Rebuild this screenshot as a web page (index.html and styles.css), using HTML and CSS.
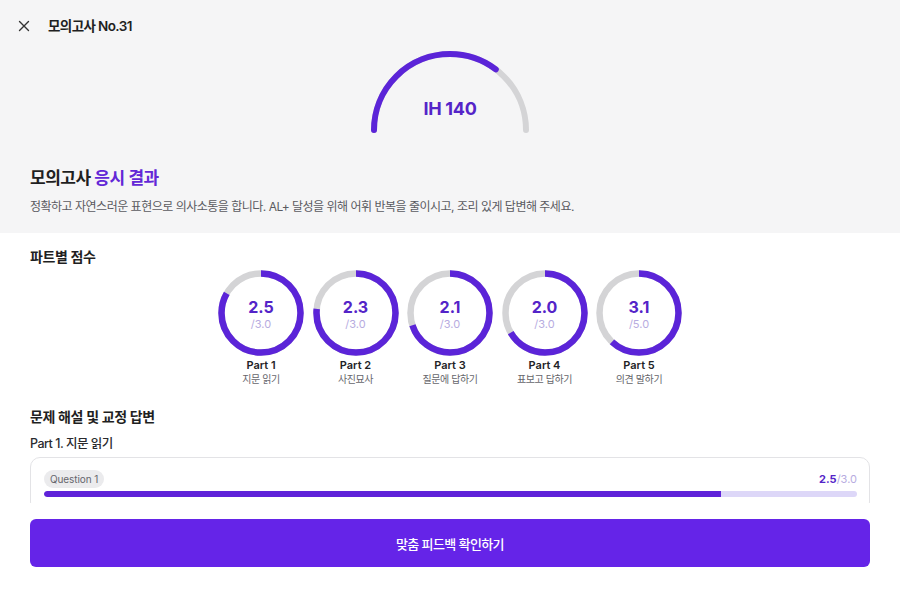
FILE: index.html
```html
<!DOCTYPE html>
<html lang="ko">
<head>
<meta charset="utf-8">
<title>모의고사 No.31</title>
<link rel="stylesheet" href="styles.css">
</head>
<body>
<div class="page">
  <header class="top">
    <div class="topbar">
      <button class="close" aria-label="닫기">
        <svg width="12" height="12" viewBox="0 0 12 12"><path d="M1.5 1.5 L10.5 10.5 M10.5 1.5 L1.5 10.5" stroke="#333" stroke-width="1.4" stroke-linecap="round" fill="none"/></svg>
      </button>
      <span class="toptitle">모의고사 No.31</span>
    </div>
    <div class="gauge">
      <svg width="164" height="90" viewBox="0 0 164 90">
        <path d="M6 83 A76 76 0 0 1 158 83" stroke="#d4d4d6" stroke-width="6" fill="none" stroke-linecap="round"/>
        <path d="M6 83 A76 76 0 0 1 158 83" stroke="#5b24d8" stroke-width="6" fill="none" stroke-linecap="round" pathLength="100" stroke-dasharray="70.6 200"/>
      </svg>
      <div class="gauge-label">IH 140</div>
    </div>
    <h1 class="result-title">모의고사 <span class="accent">응시 결과</span></h1>
    <p class="result-desc">정확하고 자연스러운 표현으로 의사소통을 합니다. AL+ 달성을 위해 어휘 반복을 줄이시고, 조리 있게 답변해 주세요.</p>
  </header>

  <main class="content">
    <h2 class="section-title">파트별 점수</h2>
    <div class="parts">
      <div class="part">
        <div class="ring">
          <svg width="86" height="86" viewBox="0 0 86 86">
            <circle cx="43" cy="43" r="39.5" stroke="#d4d4d6" stroke-width="6.5" fill="none"/>
            <circle cx="43" cy="43" r="39.5" stroke="#5b24d8" stroke-width="6.5" fill="none" pathLength="100" stroke-dasharray="83.3 200" transform="rotate(-90 43 43)"/>
          </svg>
          <div class="ring-text"><span class="score">2.5</span><span class="max">/3.0</span></div>
        </div>
        <div class="part-name">Part 1</div>
        <div class="part-sub">지문 읽기</div>
      </div>
      <div class="part">
        <div class="ring">
          <svg width="86" height="86" viewBox="0 0 86 86">
            <circle cx="43" cy="43" r="39.5" stroke="#d4d4d6" stroke-width="6.5" fill="none"/>
            <circle cx="43" cy="43" r="39.5" stroke="#5b24d8" stroke-width="6.5" fill="none" pathLength="100" stroke-dasharray="76.7 200" transform="rotate(-90 43 43)"/>
          </svg>
          <div class="ring-text"><span class="score">2.3</span><span class="max">/3.0</span></div>
        </div>
        <div class="part-name">Part 2</div>
        <div class="part-sub">사진묘사</div>
      </div>
      <div class="part">
        <div class="ring">
          <svg width="86" height="86" viewBox="0 0 86 86">
            <circle cx="43" cy="43" r="39.5" stroke="#d4d4d6" stroke-width="6.5" fill="none"/>
            <circle cx="43" cy="43" r="39.5" stroke="#5b24d8" stroke-width="6.5" fill="none" pathLength="100" stroke-dasharray="70 200" transform="rotate(-90 43 43)"/>
          </svg>
          <div class="ring-text"><span class="score">2.1</span><span class="max">/3.0</span></div>
        </div>
        <div class="part-name">Part 3</div>
        <div class="part-sub">질문에 답하기</div>
      </div>
      <div class="part">
        <div class="ring">
          <svg width="86" height="86" viewBox="0 0 86 86">
            <circle cx="43" cy="43" r="39.5" stroke="#d4d4d6" stroke-width="6.5" fill="none"/>
            <circle cx="43" cy="43" r="39.5" stroke="#5b24d8" stroke-width="6.5" fill="none" pathLength="100" stroke-dasharray="66.7 200" transform="rotate(-90 43 43)"/>
          </svg>
          <div class="ring-text"><span class="score">2.0</span><span class="max">/3.0</span></div>
        </div>
        <div class="part-name">Part 4</div>
        <div class="part-sub">표보고 답하기</div>
      </div>
      <div class="part">
        <div class="ring">
          <svg width="86" height="86" viewBox="0 0 86 86">
            <circle cx="43" cy="43" r="39.5" stroke="#d4d4d6" stroke-width="6.5" fill="none"/>
            <circle cx="43" cy="43" r="39.5" stroke="#5b24d8" stroke-width="6.5" fill="none" pathLength="100" stroke-dasharray="62 200" transform="rotate(-90 43 43)"/>
          </svg>
          <div class="ring-text"><span class="score">3.1</span><span class="max">/5.0</span></div>
        </div>
        <div class="part-name">Part 5</div>
        <div class="part-sub">의견 말하기</div>
      </div>
    </div>

    <h2 class="section-title review-title">문제 해설 및 교정 답변</h2>
    <h3 class="part-heading">Part 1. 지문 읽기</h3>
    <div class="card">
      <div class="card-head">
        <span class="pill">Question 1</span>
        <span class="q-score"><b>2.5</b>/3.0</span>
      </div>
      <div class="bar"><div class="bar-fill" style="width:83.3%"></div></div>
    </div>
  </main>

  <footer class="footer">
    <button class="cta">맞춤 피드백 확인하기</button>
  </footer>
</div>
</body>
</html>
```

FILE: styles.css
```css
* { box-sizing: border-box; }
html, body { margin: 0; padding: 0; }
body {
  font-family: "Inter", "Noto Sans CJK KR", "Noto Sans", sans-serif;
  color: #1f1f22;
  background: #ffffff;
}
.page {
  width: 900px;
  height: 602px;
  display: flex;
  flex-direction: column;
  overflow: hidden;
}
.top {
  background: #f5f5f6;
  padding: 0 30px 16px;
}
.topbar {
  height: 50px;
  display: flex;
  align-items: center;
  margin-left: -12px;
}
.close {
  width: 12px;
  height: 12px;
  padding: 0;
  border: 0;
  background: none;
  display: flex;
  margin-right: 18px;
  margin-top: 1px;
}
.toptitle {
  font-size: 13.5px;
  font-weight: 600;
  color: #1f1f22;
  letter-spacing: -0.6px;
}
.gauge {
  position: relative;
  width: 164px;
  height: 90px;
  margin: -3px auto 0;
}
.gauge svg { display: block; }
.gauge-label {
  position: absolute;
  left: 0;
  right: 0;
  top: 50px;
  text-align: center;
  font-size: 18px;
  font-weight: 700;
  color: #5424c8;
  letter-spacing: -0.3px;
  line-height: 24px;
}
.result-title {
  margin: 28px 0 0;
  font-size: 17px;
  line-height: 26px;
  font-weight: 600;
  color: #1f1f22;
  letter-spacing: -0.5px;
}
.accent { color: #6327d6; }
.result-desc {
  margin: 6px 0 0;
  font-size: 12px;
  line-height: 20px;
  color: #5a5a60;
  letter-spacing: -0.5px;
}
.content {
  flex: 1;
  overflow: hidden;
  padding: 14px 30px 0;
}
.section-title {
  margin: 0;
  font-size: 14px;
  line-height: 20px;
  font-weight: 600;
  color: #1f1f22;
  letter-spacing: -0.4px;
}
.parts {
  display: flex;
  justify-content: center;
  gap: 8.5px;
  margin-top: 3px;
}
.part {
  width: 86px;
  display: flex;
  flex-direction: column;
  align-items: center;
}
.ring {
  position: relative;
  width: 86px;
  height: 86px;
}
.ring svg { display: block; }
.ring-text {
  position: absolute;
  inset: 0;
  display: flex;
  flex-direction: column;
  align-items: center;
  justify-content: center;
  padding-top: 3px;
}
.score {
  font-size: 16px;
  font-weight: 700;
  line-height: 19px;
  color: #5424c8;
}
.max {
  font-size: 11px;
  line-height: 14px;
  color: #b7acdf;
}
.part-name {
  margin-top: 2px;
  font-size: 11px;
  line-height: 14px;
  font-weight: 600;
  color: #222226;
}
.part-sub {
  font-size: 10px;
  line-height: 14px;
  color: #66666c;
  white-space: nowrap;
  letter-spacing: -0.4px;
}
.review-title { margin-top: 21px; }
.part-heading {
  margin: 8px 0 0;
  font-size: 12.5px;
  line-height: 18px;
  font-weight: 500;
  color: #2a2a2e;
  letter-spacing: -0.5px;
}
.card {
  margin-top: 4px;
  border: 1px solid #e3e3e6;
  border-radius: 10px;
  padding: 12px 12px 14px 13px;
}
.card-head {
  display: flex;
  justify-content: space-between;
  align-items: center;
}
.pill {
  background: #ebebed;
  border-radius: 9px;
  padding: 0 6px;
  font-size: 10px;
  line-height: 18px;
  color: #66666c;
  letter-spacing: -0.1px;
}
.q-score {
  font-size: 11px;
  color: #b7acdf;
}
.q-score b {
  font-weight: 700;
  color: #5424c8;
}
.bar {
  margin-top: 3px;
  height: 6px;
  border-radius: 3px;
  background: #ddd7f8;
  overflow: hidden;
}
.bar-fill {
  height: 100%;
  background: #5f22d9;
  border-radius: 3px 0 0 3px;
}
.footer {
  padding: 16px 30px 35px;
  background: #ffffff;
}
.cta {
  width: 100%;
  height: 48px;
  border: 0;
  border-radius: 6px;
  background: #6524e8;
  color: #ffffff;
  font-family: "Inter", "Noto Sans CJK KR", "Noto Sans", sans-serif;
  font-size: 13px;
  font-weight: 500;
  letter-spacing: -0.6px;
}
```
